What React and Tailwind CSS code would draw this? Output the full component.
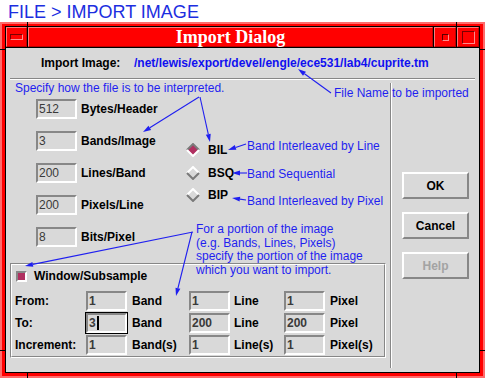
import React from 'react';

const BLUE = '#1f1ff0';

function Entry({ value, focus }) {
  return (
    <div
      className={`relative h-[20px] w-[41px] shrink-0 border-2 border-t-[#878787] border-l-[#878787] border-b-white border-r-white bg-[#d9d9d9] pl-[1px] text-[12px] leading-[16px] text-[#3a3a3a] ${
        focus ? 'outline outline-1 outline-black' : ''
      }`}
    >
      {value}
      {focus && <span className="inline-block ml-px h-[14px] w-[2px] bg-black align-[-3px]" />}
    </div>
  );
}

function Diamond({ on }) {
  return (
    <svg width="14" height="14" viewBox="0 0 14 14" className="shrink-0">
      <polygon points="7,1 13,7 7,13 1,7" fill={on ? '#b03060' : '#d9d9d9'} />
      <polyline points="1,7 7,1 13,7" fill="none" stroke={on ? '#7a7a7a' : '#ffffff'} strokeWidth="2" />
      <polyline points="1,7 7,13 13,7" fill="none" stroke={on ? '#ffffff' : '#7a7a7a'} strokeWidth="2" />
    </svg>
  );
}

function Arrow({ x1, y1, x2, y2 }) {
  const dx = x2 - x1;
  const dy = y2 - y1;
  const L = Math.hypot(dx, dy);
  const ux = dx / L;
  const uy = dy / L;
  const hl = 8;
  const hw = 2.5;
  const bx = x2 - ux * hl;
  const by = y2 - uy * hl;
  const pts = `${x2},${y2} ${bx - uy * hw},${by + ux * hw} ${bx + uy * hw},${by - ux * hw}`;
  return (
    <g>
      <line x1={x1} y1={y1} x2={bx} y2={by} stroke={BLUE} strokeWidth="1.1" />
      <polygon points={pts} fill={BLUE} />
    </g>
  );
}

const arrows = [
  [199, 97, 143, 132],
  [200, 97, 210, 142],
  [331, 93, 298, 69],
  [246, 144, 228, 150],
  [247, 173, 232, 173],
  [246, 200, 232, 198],
  [193, 232, 25, 266],
  [192, 232, 176, 296],
];

function Button({ children, disabled }) {
  return (
    <div
      className={`flex h-[27px] w-[67px] items-center justify-center border-2 border-t-white border-l-white border-b-[#878787] border-r-[#878787] text-[12px] font-bold ${
        disabled ? 'text-[#a3a3a3]' : 'text-black'
      }`}
    >
      {children}
    </div>
  );
}

function TitleBtn({ children, className }) {
  return (
    <div className={`flex h-full items-center justify-center border-t border-l border-t-[#ff7a7a] border-l-[#ff7a7a] border-b border-r border-b-[#c00000] border-r-[#c00000] ${className}`}>
      {children}
    </div>
  );
}

const fieldRows = [
  ['512', 'Bytes/Header'],
  ['3', 'Bands/Image'],
  ['200', 'Lines/Band'],
  ['200', 'Pixels/Line'],
  ['8', 'Bits/Pixel'],
];

const radios = [
  ['BIL', true],
  ['BSQ', false],
  ['BIP', false],
];

const gridRows = [
  ['From:', '1', 'Band', '1', 'Line', '1', 'Pixel', false],
  ['To:', '3', 'Band', '200', 'Line', '200', 'Pixel', true],
  ['Increment:', '1', 'Band(s)', '1', 'Line(s)', '1', 'Pixel(s)', false],
];

export default function App() {
  return (
    <div className="relative h-[378px] w-[485px] overflow-hidden bg-white font-['Liberation_Sans',Arial,sans-serif]">
      {/* Heading */}
      <div className="h-[22px] pl-[8px] pt-[2px] text-[18px] leading-[20px] text-[#1c2ee0]">FILE &gt; IMPORT IMAGE</div>

      {/* Window frame */}
      <div className="relative h-[356px] w-[485px] border-2 border-[#ff6b6b] bg-[#ff0000] px-[3px] pt-[2px] pb-[3px]">
        <div className="flex h-full flex-col border border-black">
          {/* Title bar */}
          <div className="flex h-[21px] shrink-0 border-b border-black bg-[#ff0000]">
            <div className="w-[22px] border-r border-black">
              <TitleBtn className="w-[21px]">
                <div className="h-[6px] w-[13px] border border-t-[#7a0000] border-l-[#7a0000] border-b-[#ff8c8c] border-r-[#ff8c8c]" />
              </TitleBtn>
            </div>
            <TitleBtn className="flex-1">
              <span className="font-['Liberation_Serif',serif] text-[18px] font-bold leading-[21px] text-white">Import Dialog</span>
            </TitleBtn>
            <div className="w-[23px] border-l border-black">
              <TitleBtn className="w-[22px]">
                <div className="h-[7px] w-[7px] border border-t-[#5a0000] border-l-[#5a0000] border-b-[#ff8c8c] border-r-[#ff8c8c]" />
              </TitleBtn>
            </div>
            <div className="w-[23px] border-l border-black">
              <TitleBtn className="w-[22px]">
                <div className="h-[13px] w-[13px] border border-t-[#7a0000] border-l-[#7a0000] border-b-[#ff8c8c] border-r-[#ff8c8c]" />
              </TitleBtn>
            </div>
          </div>

          {/* Content */}
          <div className="flex flex-1 flex-col bg-[#d9d9d9]">
            <div className="flex pl-[35px] pt-[7px] text-[12px] font-bold leading-[16px]">
              <span className="w-[93px] text-black">Import Image:</span>
              <span className="text-[#1010f0]">/net/lewis/export/devel/engle/ece531/lab4/cuprite.tm</span>
            </div>
            <div className="mx-[4px] mt-[7px] h-[2px] border-t border-t-[#878787] border-b border-b-white" />

            <div className="flex flex-1">
              {/* Left section */}
              <div className="flex w-[384px] flex-col">
                <div className="mt-[1px] pl-[9px] text-[12px] leading-[15px]" style={{ color: BLUE }}>
                  Specify how the file is to be interpreted.
                </div>
                <div className="mt-[3px] flex">
                  <div className="flex w-[180px] flex-col gap-[12px] pl-[30px]">
                    {fieldRows.map(([v, l]) => (
                      <div key={l} className="flex h-[20px] items-center gap-[4px]">
                        <Entry value={v} />
                        <span className="text-[12px] font-bold text-black">{l}</span>
                      </div>
                    ))}
                  </div>
                  <div className="mt-[40px] flex flex-col">
                    {radios.map(([l, on]) => (
                      <div key={l} className="flex h-[22.5px] items-center gap-[8px]">
                        <Diamond on={on} />
                        <span className="text-[12px] font-bold text-black">{l}</span>
                      </div>
                    ))}
                  </div>
                </div>

                {/* Window/Subsample frame */}
                <div className="ml-[4px] mt-[16px] w-[376px] border border-t-[#878787] border-l-[#878787] border-b-white border-r-white">
                  <div className="border border-t-white border-l-white border-b-[#878787] border-r-[#878787] pl-[3px] pt-[4px]">
                    <div className="flex h-[14px] items-center gap-[7px] pl-px">
                      <div className="h-[11px] w-[11px] border-2 border-t-[#878787] border-l-[#878787] border-b-white border-r-white bg-[#b03060]" />
                      <span className="text-[12px] font-bold text-black">Window/Subsample</span>
                    </div>
                    <div className="mt-[7px] flex flex-col">
                      {gridRows.map(([a, v1, b, v2, c, v3, d, f]) => (
                        <div key={a} className="flex h-[22px] items-center text-[12px] font-bold text-black">
                          <span className="w-[71px]">{a}</span>
                          <Entry value={v1} focus={f} />
                          <span className="w-[62px] pl-[5px]">{b}</span>
                          <Entry value={v2} />
                          <span className="w-[54px] pl-[4px]">{c}</span>
                          <Entry value={v3} />
                          <span className="pl-[5px]">{d}</span>
                        </div>
                      ))}
                    </div>
                  </div>
                </div>
              </div>

              {/* Vertical separator */}
              <div className="mt-[3px] mb-[4px] w-[2px] border-l border-l-[#878787] border-r border-r-white" />

              {/* Right section */}
              <div className="flex flex-1 flex-col gap-[13px] pl-[10px] pt-[92px]">
                <Button>OK</Button>
                <Button>Cancel</Button>
                <Button disabled>Help</Button>
              </div>
            </div>
          </div>
        </div>

        {/* Frame corner notches */}
        <span className="absolute left-[25px] top-[-2px] h-[5px] w-px bg-black" />
        <span className="absolute left-[454px] top-[-2px] h-[5px] w-px bg-black" />
        <span className="absolute bottom-[-2px] left-[25px] h-[5px] w-px bg-black" />
        <span className="absolute bottom-[-2px] left-[454px] h-[5px] w-px bg-black" />
        <span className="absolute left-[-2px] top-[25px] h-px w-[6px] bg-black" />
        <span className="absolute right-[-2px] top-[25px] h-px w-[6px] bg-black" />
        <span className="absolute bottom-[25px] left-[-2px] h-px w-[6px] bg-black" />
        <span className="absolute bottom-[25px] right-[-2px] h-px w-[6px] bg-black" />
      </div>

      {/* Annotations */}
      <div className="pointer-events-none absolute left-[334px] top-[86px] text-[12px] leading-[14px]" style={{ color: BLUE }}>
        File Name to be imported
      </div>
      <div className="pointer-events-none absolute left-[247px] top-[139px] text-[12px] leading-[14px]" style={{ color: BLUE }}>
        Band Interleaved by Line
      </div>
      <div className="pointer-events-none absolute left-[247px] top-[167px] text-[12px] leading-[14px]" style={{ color: BLUE }}>
        Band Sequential
      </div>
      <div className="pointer-events-none absolute left-[247px] top-[194px] text-[12px] leading-[14px]" style={{ color: BLUE }}>
        Band Interleaved by Pixel
      </div>
      <div className="pointer-events-none absolute left-[196px] top-[223px] text-[12px] leading-[13.7px]" style={{ color: BLUE }}>
        For a portion of the image
        <br />
        (e.g. Bands, Lines, Pixels)
        <br />
        specify the portion of the image
        <br />
        which you want to import.
      </div>

      <svg className="pointer-events-none absolute left-0 top-0" width="485" height="378" viewBox="0 0 485 378">
        {arrows.map(([x1, y1, x2, y2], i) => (
          <Arrow key={i} x1={x1} y1={y1} x2={x2} y2={y2} />
        ))}
      </svg>
    </div>
  );
}
